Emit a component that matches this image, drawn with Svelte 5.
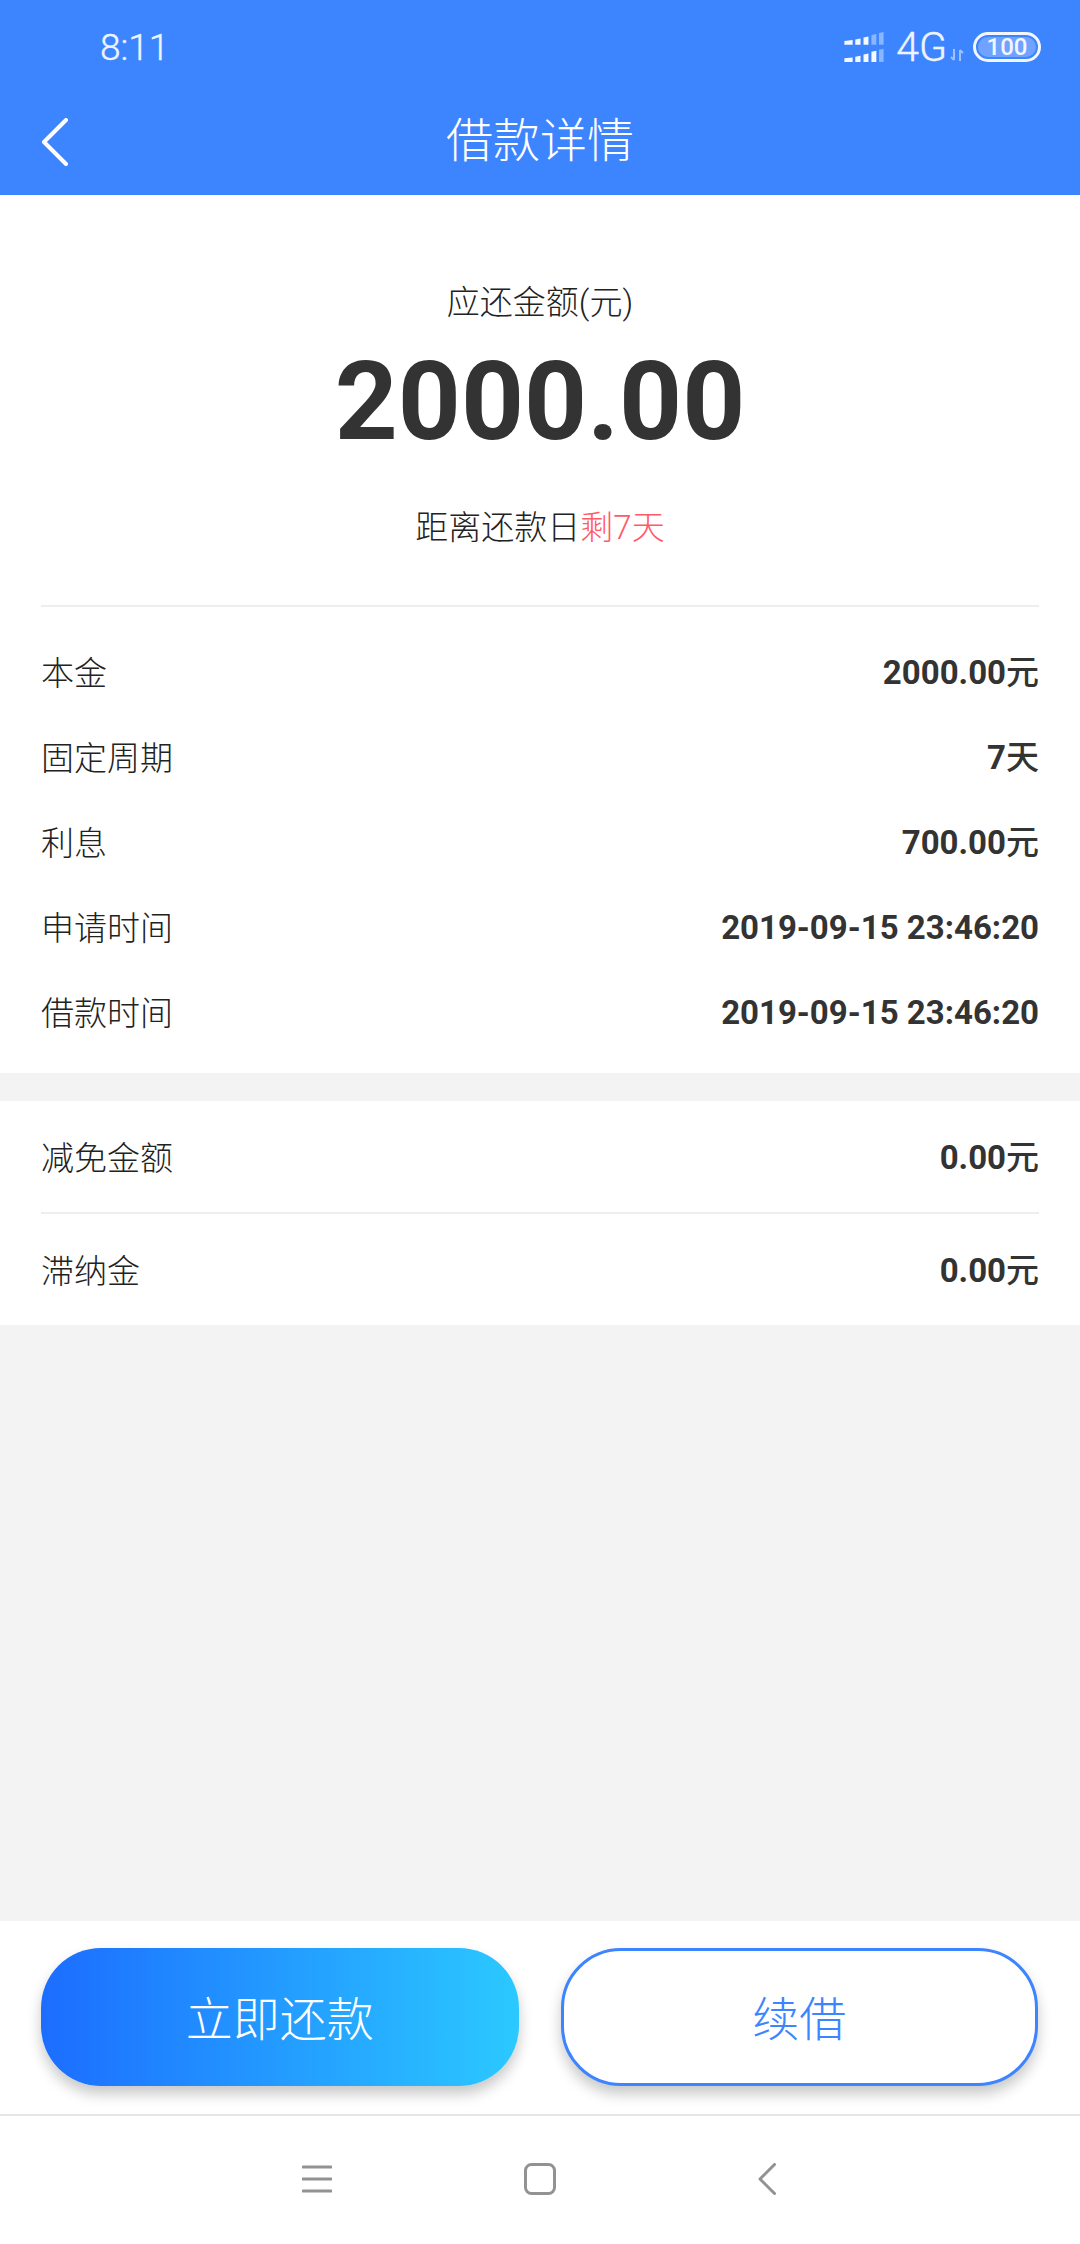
<script lang="ts">
	const details = [
		{ label: '本金', value: '2000.00', unit: '元' },
		{ label: '固定周期', value: '7', unit: '天' },
		{ label: '利息', value: '700.00', unit: '元' },
		{ label: '申请时间', value: '2019-09-15 23:46:20', unit: '' },
		{ label: '借款时间', value: '2019-09-15 23:46:20', unit: '' }
	];
	const fees = [
		{ label: '减免金额', value: '0.00', unit: '元' },
		{ label: '滞纳金', value: '0.00', unit: '元' }
	];
	// signal bars, slanted tops, traced from the status bar
	const bars = [
		{ x1: 135, x2: 160, top: [118, 115], low: [171, 168], bottom: [130, 182], dim: [false, false] },
		{ x1: 168, x2: 184, top: [114, 111], low: [166, 163], bottom: [130, 182], dim: [false, false] },
		{ x1: 193, x2: 208, top: [108, 105], low: [159, 156], bottom: [130, 182], dim: [false, false] },
		{ x1: 217, x2: 232, top: [100, 97], low: [151, 148], bottom: [130, 182], dim: [true, false] },
		{ x1: 240, x2: 254, top: [94, 91], low: [145, 142], bottom: [130, 182], dim: [true, true] }
	];
</script>

<div class="page">
	<header class="top">
		<div class="status">
			<span class="clock">8:11</span>
			<div class="status-right">
				<svg class="signal" viewBox="135 91 119 91" aria-hidden="true">
					{#each bars as bar}
						<polygon
							points="{bar.x1},{bar.top[0]} {bar.x2},{bar.top[1]} {bar.x2},{bar.bottom[0]} {bar.x1},{bar.bottom[0]}"
							fill="#fff"
							opacity={bar.dim[0] ? 0.4 : 0.95}
						/>
						<polygon
							points="{bar.x1},{bar.low[0]} {bar.x2},{bar.low[1]} {bar.x2},{bar.bottom[1]} {bar.x1},{bar.bottom[1]}"
							fill="#fff"
							opacity={bar.dim[1] ? 0.4 : 0.95}
						/>
					{/each}
				</svg>
				<span class="net">4G</span>
				<svg class="updown" viewBox="0 0 14 14" aria-hidden="true">
					<path d="M4 1v11M1 9l3 3M10 13V2M13 5l-3-3" fill="none" stroke="#fff" stroke-opacity="0.5" stroke-width="2" />
				</svg>
				<div class="battery"><span>100</span></div>
			</div>
		</div>
		<div class="titlebar">
			<svg class="back" viewBox="0 0 28 48" aria-hidden="true">
				<path d="M25 2 3 24l22 22" fill="none" stroke="#fff" stroke-width="4" stroke-linecap="round" stroke-linejoin="round" />
			</svg>
			<h1>借款详情</h1>
		</div>
	</header>

	<section class="card">
		<div class="hero">
			<p class="hero-label">应还金额(元)</p>
			<p class="amount">2000.00</p>
			<p class="due">距离还款日<span>剩7天</span></p>
		</div>
		<div class="rows">
			{#each details as row}
				<div class="row">
					<span class="label">{row.label}</span>
					<b>{row.value}<i>{row.unit}</i></b>
				</div>
			{/each}
		</div>
	</section>

	<section class="fees">
		{#each fees as row}
			<div class="fee">
				<span class="label">{row.label}</span>
				<b>{row.value}<i>{row.unit}</i></b>
			</div>
		{/each}
	</section>

	<div class="spacer"></div>

	<footer class="actions">
		<button type="button" class="btn primary"><span>立即还款</span></button>
		<button type="button" class="btn outline"><span>续借</span></button>
	</footer>

	<nav class="navbar">
		<svg class="nav-menu" viewBox="0 0 30 28" aria-hidden="true">
			<path d="M1 2h28M1 14h28M1 26h28" fill="none" stroke="#929292" stroke-width="3" stroke-linecap="round" />
		</svg>
		<svg class="nav-home" viewBox="0 0 32 32" aria-hidden="true">
			<rect x="1.5" y="1.5" width="29" height="29" rx="6" fill="none" stroke="#929292" stroke-width="3" />
		</svg>
		<svg class="nav-back" viewBox="0 0 18 32" aria-hidden="true">
			<path d="M16.5 1.5 2 16l14.5 14.5" fill="none" stroke="#929292" stroke-width="3" stroke-linecap="round" stroke-linejoin="round" />
		</svg>
	</nav>
</div>

<style>
	:global(body) {
		margin: 0;
		background: #f3f3f3;
	}

	.page {
		display: flex;
		flex-direction: column;
		width: 1080px;
		height: 2244px;
		font-family: Roboto, "Noto Sans CJK SC", sans-serif;
		color: #333;
		overflow: hidden;
	}

	.top {
		height: 195px;
		background: #3d84ff;
		color: #fff;
	}

	.status {
		display: flex;
		align-items: center;
		justify-content: space-between;
		height: 94px;
		padding: 0 39px 0 100px;
	}

	.clock {
		font-size: 37px;
		font-weight: 300;
		color: #eef4ff;
		-webkit-text-stroke: 0.4px #eef4ff;
	}

	.status-right {
		display: flex;
		align-items: center;
	}

	.signal {
		width: 40px;
		height: 30px;
		margin-right: 12px;
	}

	.net {
		font-size: 41px;
		font-weight: 300;
		line-height: 1;
		color: #eef4ff;
		-webkit-text-stroke: 0.4px #eef4ff;
	}

	.updown {
		width: 14px;
		height: 14px;
		margin: 16px 9px 0 3px;
	}

	.battery {
		display: flex;
		align-items: center;
		justify-content: center;
		box-sizing: border-box;
		width: 68px;
		height: 30px;
		border: 3px solid #f2f6ff;
		border-radius: 15px;
		background: #6fa3ff;
		background-clip: content-box;
		padding: 2px;
	}

	.battery span {
		font-size: 24px;
		font-weight: 500;
		line-height: 1;
		color: #f2f6ff;
	}

	.titlebar {
		position: relative;
		display: flex;
		align-items: center;
		justify-content: center;
		height: 101px;
		padding-bottom: 8px;
		box-sizing: border-box;
	}

	.back {
		position: absolute;
		left: 41px;
		top: 24px;
		width: 28px;
		height: 48px;
	}

	h1 {
		margin: 0;
		font-size: 47px;
		font-weight: 300;
		line-height: 1;
	}

	.card {
		height: 878px;
		padding: 0 41px;
		background: #fff;
	}

	.hero {
		display: flex;
		flex-direction: column;
		align-items: center;
		height: 412px;
		border-bottom: 2px solid #eee;
		box-sizing: border-box;
		font-weight: 300;
		color: #222;
	}

	.hero p {
		margin: 0;
	}

	.hero-label {
		margin-top: 88px !important;
		font-size: 33px;
		line-height: 40px;
	}

	.amount {
		margin-top: 15px !important;
		font-size: 110px;
		font-weight: 700;
		line-height: 128px;
		color: #333;
	}

	.due {
		margin-top: 42px !important;
		font-size: 33px;
		line-height: 40px;
	}

	.due span {
		color: #ff5a68;
	}

	.rows {
		padding-top: 23px;
	}

	.row,
	.fee {
		display: flex;
		align-items: center;
		justify-content: space-between;
		font-size: 33px;
		line-height: 44px;
	}

	.label {
		padding-top: 2px;
		font-weight: 300;
		color: #222;
	}

	.row {
		height: 85px;
	}

	b {
		font-size: 33px;
		font-weight: 700;
	}

	b i {
		font-style: normal;
		font-weight: 500;
	}

	.fees {
		margin-top: 28px;
		padding: 0 41px;
		background: #fff;
	}

	.fee {
		box-sizing: border-box;
		height: 111px;
		padding-top: 3px;
	}

	.fee + .fee {
		height: 113px;
		border-top: 2px solid #eee;
	}

	.spacer {
		flex: 1;
	}

	.actions {
		display: grid;
		grid-template-columns: 1fr 1fr;
		gap: 42px;
		padding: 27px 42px 28px 41px;
		background: #fff;
		border-bottom: 2px solid #e6e6e6;
	}

	.btn {
		height: 138px;
		border-radius: 60px;
		padding: 0 0 4px;
		font-family: inherit;
		font-size: 47px;
		font-weight: 300;
		box-shadow: 0 8px 14px rgba(0, 0, 0, 0.22);
	}

	.primary {
		border: none;
		background: linear-gradient(90deg, #1c6dff, #2bc9ff);
		color: #fff;
	}

	.outline {
		border: 3px solid #3d84ff;
		background: #fff;
		color: #3d84ff;
	}

	.navbar {
		display: flex;
		align-items: flex-start;
		height: 128px;
		padding: 47px 0 0 302px;
		box-sizing: border-box;
		background: #fff;
	}

	.nav-menu {
		width: 30px;
		height: 28px;
		margin-top: 2px;
	}

	.nav-home {
		width: 32px;
		height: 32px;
		margin-left: 192px;
	}

	.nav-back {
		width: 18px;
		height: 32px;
		margin-left: 202px;
	}
</style>
